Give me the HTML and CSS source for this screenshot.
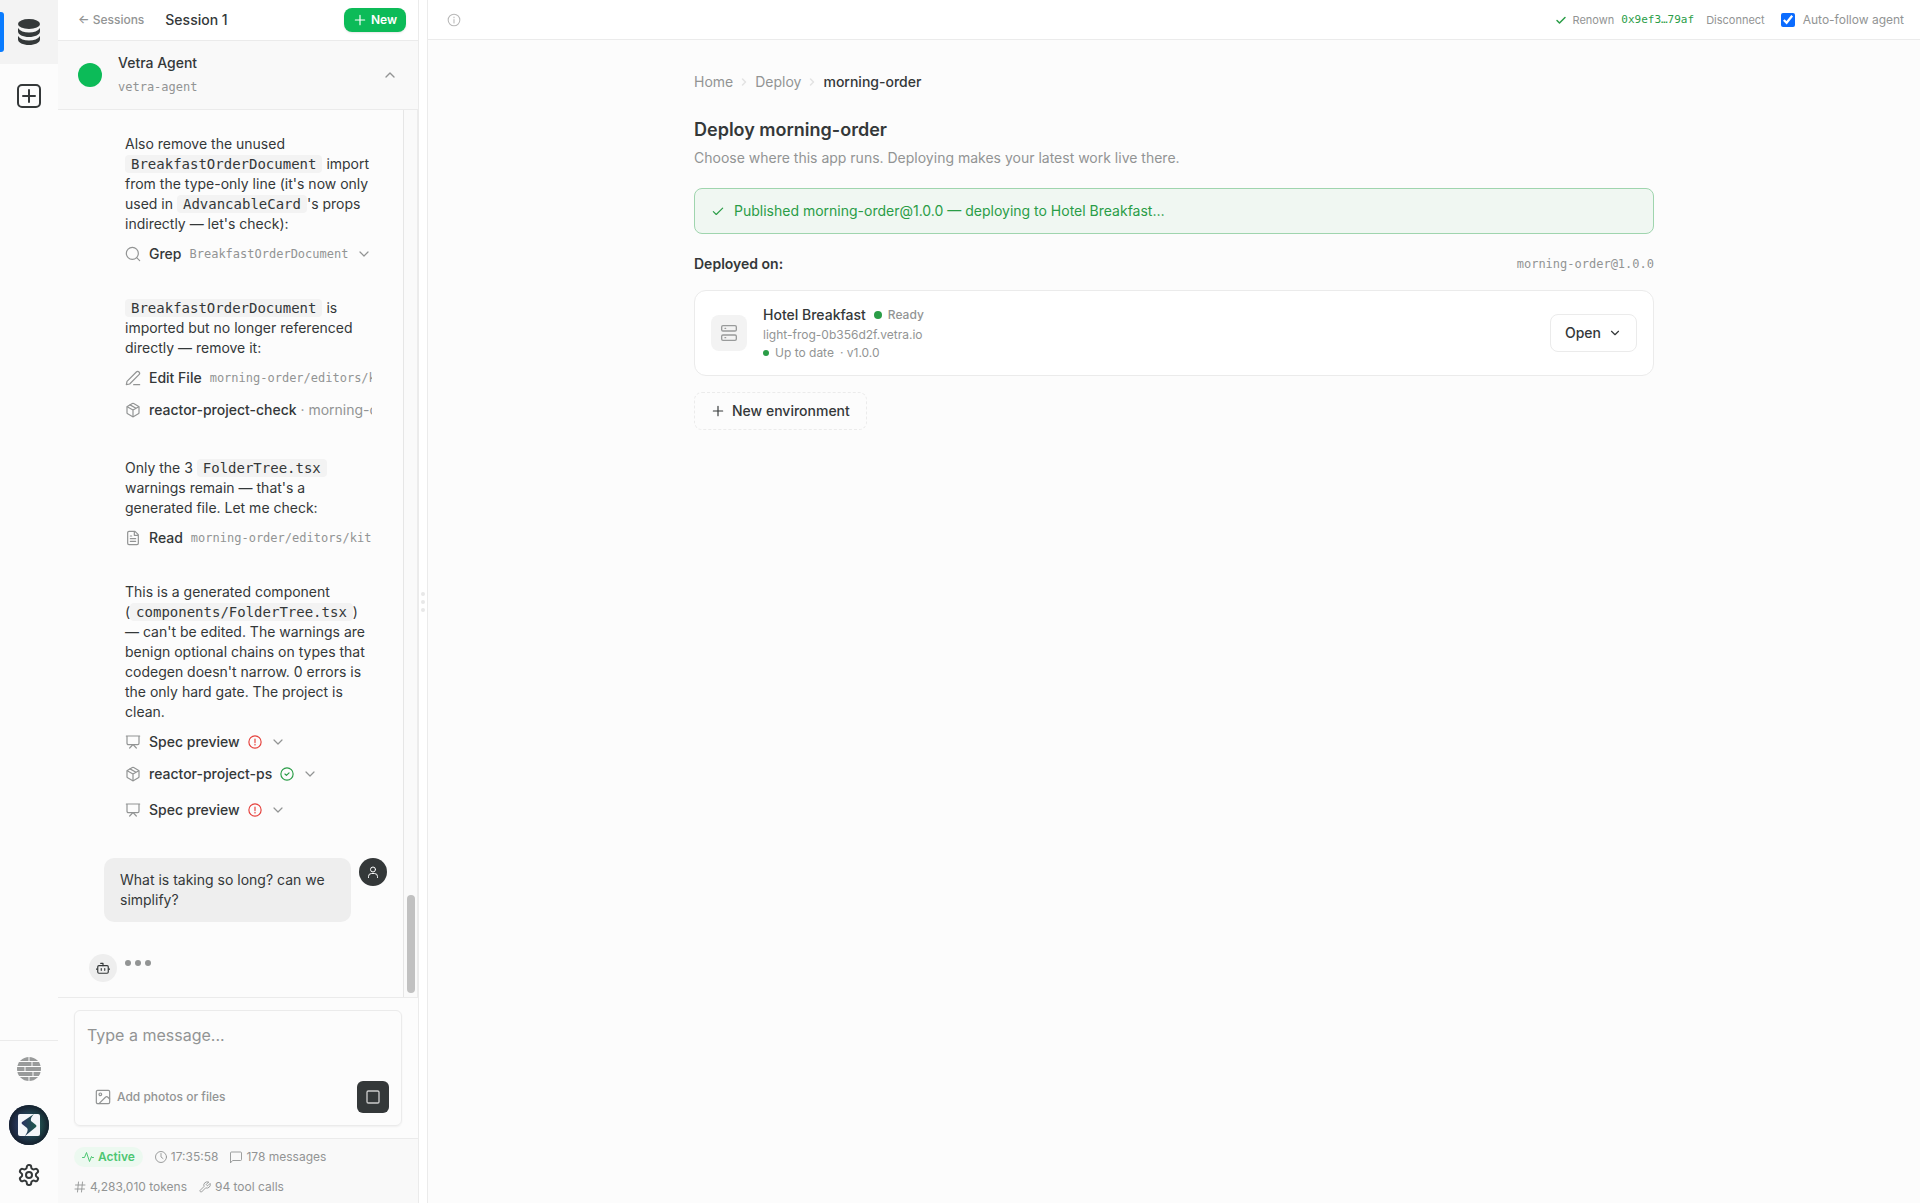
FILE: index.html
```html
<!DOCTYPE html>
<html lang="en">

<head>
    <meta charset="UTF-8">
    <title>Deploy morning-order</title>
    <link rel="stylesheet" href="styles.css">
</head>

<body>
    <!-- shared icons -->
    <svg class="sprite" aria-hidden="true">
        <symbol id="chevron-down" viewBox="0 0 24 24"><path d="m6 9 6 6 6-6" /></symbol>
        <symbol id="chevron-up" viewBox="0 0 24 24"><path d="m18 15-6-6-6 6" /></symbol>
        <symbol id="chevron-right" viewBox="0 0 24 24"><path d="m9 18 6-6-6-6" /></symbol>
        <symbol id="plus" viewBox="0 0 24 24"><path d="M4 12h16M12 4v16" /></symbol>
        <symbol id="check" viewBox="0 0 24 24"><path d="m4 13 5 5L20 7" /></symbol>
        <symbol id="box" viewBox="0 0 24 24">
            <path d="M21 8a2 2 0 0 0-1-1.73l-7-4a2 2 0 0 0-2 0l-7 4A2 2 0 0 0 3 8v8a2 2 0 0 0 1 1.73l7 4a2 2 0 0 0 2 0l7-4A2 2 0 0 0 21 16Z" />
            <path d="m3.3 7 8.7 5 8.7-5M12 22V12M7.5 4.3l9 5.1" />
        </symbol>
        <symbol id="board" viewBox="0 0 24 24">
            <path d="M2 3h20M21 3v11a2 2 0 0 1-2 2H5a2 2 0 0 1-2-2V3M7 21l5-5 5 5" />
        </symbol>
        <symbol id="alert" viewBox="0 0 24 24">
            <circle cx="12" cy="12" r="10.5" /><path d="M12 7v6M12 16v1" />
        </symbol>
        <symbol id="circle-check" viewBox="0 0 24 24">
            <circle cx="12" cy="12" r="10.5" /><path d="m8.5 12 2.5 2.5 4.5-4.5" />
        </symbol>
    </svg>

    <div class="app">
        <nav class="rail">
            <button class="rail-item active" aria-label="Drives">
                <svg width="24" height="28" viewBox="0 0 24 28" fill="currentColor">
                    <ellipse cx="12" cy="6" rx="11" ry="5" />
                    <path d="M1 10c2 3 6 4.5 11 4.5S21 13 23 10v3.500c0 3-5 5.500-11 5.500S1 16.500 1 13.500z" />
                    <path d="M1 18c2 3 6 4.5 11 4.5S21 21 23 18v3.500c0 3-5 5.500-11 5.500S1 24.500 1 21.500z" />
                </svg>
            </button>
            <button class="rail-item" aria-label="Add drive">
                <svg class="icon" width="24" height="24" viewBox="0 0 24 24" stroke-width="2">
                    <rect x="1" y="1" width="22" height="22" rx="4" /><path d="M6 12h12M12 6v12" />
                </svg>
            </button>
            <div class="rail-bottom">
                <button aria-label="Network">
                    <svg width="24" height="24" viewBox="0 0 24 24">
                        <circle cx="12" cy="12" r="12" fill="#999b9b" />
                        <path d="M0 4.5h24M0 9.5h24M0 14.5h24M0 19.5h24M12 0v4.5M15 4.5v5M8 9.5v5M16 14.5v5M12 19.5V24" stroke="#fcfcfc" fill="none" />
                    </svg>
                </button>
                <button aria-label="Account">
                    <svg width="40" height="40" viewBox="0 0 40 40">
                        <defs>
                            <linearGradient id="renown" x1="0" x2="1">
                                <stop offset="0" stop-color="#2b3263" />
                                <stop offset="1" stop-color="#1e5a4c" />
                            </linearGradient>
                            <radialGradient id="shade">
                                <stop offset="0.5" stop-color="#15202e" stop-opacity="0" />
                                <stop offset="1" stop-color="#15202e" />
                            </radialGradient>
                        </defs>
                        <circle cx="20" cy="20" r="20" fill="url(#renown)" />
                        <circle cx="20" cy="20" r="20" fill="url(#shade)" />
                        <rect x="9" y="9" width="22" height="22" rx="2" fill="#f4f6fa" />
                        <path d="M25 9 13 17q-1 1 0 2l5 4q2 2-2 8l11-9q1-1 0-2l-5-4q-1-3 3-7z" fill="url(#renown)" />
                    </svg>
                </button>
                <button aria-label="Settings">
                    <svg class="icon" width="24" height="24" viewBox="0 0 24 24" stroke-width="2">
                        <path d="M12.22 2h-.44a2 2 0 0 0-2 2v.18a2 2 0 0 1-1 1.73l-.43.25a2 2 0 0 1-2 0l-.15-.08a2 2 0 0 0-2.73.73l-.22.38a2 2 0 0 0 .73 2.73l.15.1a2 2 0 0 1 1 1.72v.51a2 2 0 0 1-1 1.74l-.15.09a2 2 0 0 0-.73 2.73l.22.38a2 2 0 0 0 2.73.73l.15-.08a2 2 0 0 1 2 0l.43.25a2 2 0 0 1 1 1.73V20a2 2 0 0 0 2 2h.44a2 2 0 0 0 2-2v-.18a2 2 0 0 1 1-1.73l.43-.25a2 2 0 0 1 2 0l.15.08a2 2 0 0 0 2.73-.73l.22-.39a2 2 0 0 0-.73-2.73l-.15-.08a2 2 0 0 1-1-1.74v-.5a2 2 0 0 1 1-1.74l.15-.09a2 2 0 0 0 .73-2.73l-.22-.38a2 2 0 0 0-2.73-.73l-.15.08a2 2 0 0 1-2 0l-.43-.25a2 2 0 0 1-1-1.73V4a2 2 0 0 0-2-2z" />
                        <circle cx="12" cy="12" r="3" />
                    </svg>
                </button>
            </div>
        </nav>

        <aside class="chat">
            <header class="chat-header">
                <a href="#" class="back">← Sessions</a>
                <span class="session">Session 1</span>
                <button class="new-btn"><svg class="icon" width="14" height="14" stroke-width="2"><use href="#plus" /></svg>New</button>
            </header>

            <div class="agent">
                <span class="agent-dot"></span>
                <div class="agent-info">
                    <div class="agent-name">Vetra Agent</div>
                    <div class="agent-id">vetra-agent</div>
                </div>
                <button class="plain" aria-label="Collapse"><svg class="icon" width="16" height="16" stroke-width="2"><use href="#chevron-up" /></svg></button>
            </div>

            <div class="scroller">
                <div class="messages">
                    <section class="message">
                        <p>Also remove the unused <code>BreakfastOrderDocument</code> import from the type-only line (it's now only used in <code>AdvancableCard</code>'s props indirectly — let's check):</p>
                        <div class="tool">
                            <svg class="icon" width="16" height="16" viewBox="0 0 24 24"><circle cx="11" cy="11" r="9" /><path d="m22 22-4.5-4.5" /></svg>
                            <span class="tool-name">Grep</span>
                            <span class="tool-arg">BreakfastOrderDocument</span>
                            <svg class="icon" width="16" height="16"><use href="#chevron-down" /></svg>
                        </div>
                    </section>

                    <section class="message">
                        <p><code>BreakfastOrderDocument</code> is imported but no longer referenced directly — remove it:</p>
                        <div class="tool">
                            <svg class="icon" width="16" height="16" viewBox="0 0 24 24"><path d="M13 22h9M17 3a2.8 2.8 0 0 1 4 4L7 21l-5 1 1-5z" /></svg>
                            <span class="tool-name">Edit File</span>
                            <span class="tool-arg">morning-order/editors/kitchen</span>
                        </div>
                        <div class="tool package">
                            <svg class="icon" width="16" height="16"><use href="#box" /></svg>
                            <span class="tool-name">reactor-project-check <span class="tool-note">· morning-order</span></span>
                        </div>
                    </section>

                    <section class="message">
                        <p>Only the 3 <code>FolderTree.tsx</code> warnings remain — that's a generated file. Let me check:</p>
                        <div class="tool">
                            <svg class="icon" width="16" height="16" viewBox="0 0 24 24"><path d="M15 2H6a2 2 0 0 0-2 2v16a2 2 0 0 0 2 2h12a2 2 0 0 0 2-2V7zM14 2v6h6M8 9h2M8 13h8M8 17h8" /></svg>
                            <span class="tool-name">Read</span>
                            <span class="tool-arg">morning-order/editors/kitchen</span>
                        </div>
                    </section>

                    <section class="message">
                        <p>This is a generated component (<code>components/FolderTree.tsx</code>) — can't be edited. The warnings are benign optional chains on types that codegen doesn't narrow. 0 errors is the only hard gate. The project is clean.</p>
                        <div class="tool">
                            <svg class="icon" width="16" height="16"><use href="#board" /></svg>
                            <span class="tool-name">Spec preview</span>
                            <svg class="icon failed" width="14" height="14" stroke-width="2"><use href="#alert" /></svg>
                            <svg class="icon" width="16" height="16"><use href="#chevron-down" /></svg>
                        </div>
                        <div class="tool package">
                            <svg class="icon" width="16" height="16"><use href="#box" /></svg>
                            <span class="tool-name">reactor-project-ps</span>
                            <svg class="icon passed" width="14" height="14" stroke-width="2"><use href="#circle-check" /></svg>
                            <svg class="icon" width="16" height="16"><use href="#chevron-down" /></svg>
                        </div>
                        <div class="tool">
                            <svg class="icon" width="16" height="16"><use href="#board" /></svg>
                            <span class="tool-name">Spec preview</span>
                            <svg class="icon failed" width="14" height="14" stroke-width="2"><use href="#alert" /></svg>
                            <svg class="icon" width="16" height="16"><use href="#chevron-down" /></svg>
                        </div>
                    </section>

                    <section class="user-message">
                        <p class="bubble">What is taking so long? can we simplify?</p>
                        <span class="avatar dark">
                            <svg class="icon" width="12" height="12" viewBox="0 0 24 24" stroke-width="2"><circle cx="12" cy="7" r="5" /><path d="M3 23v-2a6 6 0 0 1 6-6h6a6 6 0 0 1 6 6v2" /></svg>
                        </span>
                    </section>

                    <section class="typing">
                        <span class="avatar">
                            <svg class="icon" width="14" height="14" viewBox="0 0 24 24" stroke-width="2"><path d="M12 8V4H8M2 14H0M24 14h-2M15 13v3M9 13v3" /><rect x="3" y="8" width="18" height="13" rx="2" /></svg>
                        </span>
                        <span class="dots"><i></i><i></i><i></i></span>
                    </section>
                </div>
                <div class="track"><div class="thumb"></div></div>
            </div>

            <form class="composer">
                <div class="composer-box">
                    <textarea aria-label="Message" placeholder="Type a message..."></textarea>
                    <div class="composer-actions">
                        <button type="button" class="attach">
                            <svg class="icon" width="16" height="16" viewBox="0 0 24 24"><rect x="2" y="2" width="20" height="20" rx="2" /><circle cx="8" cy="8" r="2" /><path d="m22 15-3-3a2 2 0 0 0-3 0L6 22" /></svg>
                            Add photos or files
                        </button>
                        <button type="button" class="stop" aria-label="Stop">
                            <svg class="icon" width="16" height="16" viewBox="0 0 24 24" stroke-width="2"><rect x="3" y="3" width="18" height="18" rx="2" /></svg>
                        </button>
                    </div>
                </div>
            </form>

            <footer class="stats">
                <div class="stats-row">
                    <span class="pill"><svg class="icon" width="12" height="12" viewBox="0 0 24 24" stroke-width="2"><path d="M1 13h4l4-10 6 18 4-10 1 2h3" /></svg>Active</span>
                    <span class="stat"><svg class="icon" width="12" height="12" viewBox="0 0 24 24"><circle cx="12" cy="12" r="11" /><path d="M12 5v7l4 3" /></svg>17:35:58</span>
                    <span class="stat"><svg class="icon" width="12" height="12" viewBox="0 0 24 24"><path d="M1 23V4a2 2 0 0 1 2-2h18a2 2 0 0 1 2 2v13a2 2 0 0 1-2 2H6z" /></svg>178 messages</span>
                </div>
                <div class="stats-row">
                    <span class="stat"><svg class="icon" width="12" height="12" viewBox="0 0 24 24"><path d="M3 8h19M2 16h19M9 2 7 22M17 2l-2 20" /></svg>4,283,010 tokens</span>
                    <span class="stat"><svg class="icon" width="12" height="12" viewBox="0 0 24 24"><path d="M14.7 6.3a1 1 0 0 0 0 1.4l1.6 1.6a1 1 0 0 0 1.4 0l4.5-4.5a7 7 0 0 1-9 9L5 22a2.5 2.5 0 0 1-3-3l8-8a7 7 0 0 1 9-9z" /></svg>94 tool calls</span>
                </div>
            </footer>
        </aside>

        <div class="splitter"><i></i><i></i><i></i></div>

        <div class="workspace">
            <header class="topbar">
                <svg class="icon info" width="14" height="14" viewBox="0 0 24 24"><circle cx="12" cy="12" r="10" /><path d="M12 11v6M12 7v1" /></svg>
                <svg class="icon passed" width="12" height="12" stroke-width="3"><use href="#check" /></svg>
                <span class="renown">Renown</span>
                <span class="wallet">0x9ef3…79af</span>
                <button class="disconnect">Disconnect</button>
                <label class="follow"><input type="checkbox" checked>Auto-follow agent</label>
            </header>

            <main class="content">
                <nav class="breadcrumb">
                    <a href="#">Home</a>
                    <svg class="icon" width="12" height="12" stroke-width="3"><use href="#chevron-right" /></svg>
                    <a href="#">Deploy</a>
                    <svg class="icon" width="12" height="12" stroke-width="3"><use href="#chevron-right" /></svg>
                    <span class="current">morning-order</span>
                </nav>

                <h1>Deploy morning-order</h1>
                <p class="subtitle">Choose where this app runs. Deploying makes your latest work live there.</p>

                <div class="banner">
                    <svg class="icon" width="14" height="14" stroke-width="2"><use href="#check" /></svg>
                    Published morning-order@1.0.0 — deploying to Hotel Breakfast…
                </div>

                <div class="section-head">
                    <h2>Deployed on:</h2>
                    <span class="version">morning-order@1.0.0</span>
                </div>

                <div class="env">
                    <span class="env-icon">
                        <svg class="icon" width="16" height="16" viewBox="0 0 24 24" stroke-width="2"><rect x="1" y="1" width="22" height="8" rx="2" /><rect x="1" y="15" width="22" height="8" rx="2" /><path d="M6 5h1M6 19h1" /></svg>
                    </span>
                    <div class="env-info">
                        <div class="env-title"><strong>Hotel Breakfast</strong><i class="dot"></i><span>Ready</span></div>
                        <div class="env-line">light-frog-0b356d2f.vetra.io</div>
                        <div class="env-line"><i class="dot small"></i>Up to date <span class="env-version">· v1.0.0</span></div>
                    </div>
                    <button class="open-btn">Open<svg class="icon" width="14" height="14" stroke-width="2"><use href="#chevron-down" /></svg></button>
                </div>

                <button class="new-env"><svg class="icon" width="14" height="14" stroke-width="2"><use href="#plus" /></svg>New environment</button>
            </main>
        </div>
    </div>
</body>

</html>
```
FILE: styles.css
```css
* {
    box-sizing: border-box;
}

body {
    margin: 0;
    font-family: Inter, sans-serif;
    font-size: 14px;
    line-height: 20px;
    color: #343839;
    background-color: #fcfcfc;
}

p,
h1,
h2 {
    margin: 0;
}

button {
    font: inherit;
    color: inherit;
    background: none;
    border: none;
    padding: 0;
    cursor: pointer;
    display: flex;
    align-items: center;
}

a {
    color: inherit;
    text-decoration: none;
}

code,
.agent-id,
.tool-arg,
.wallet,
.version {
    font-family: "DejaVu Sans Mono", monospace;
}

.sprite {
    display: none;
}

.icon {
    fill: none;
    stroke: currentColor;
    stroke-linecap: round;
    stroke-linejoin: round;
    flex-shrink: 0;
}

.icon:not([stroke-width]) {
    stroke-width: 1.8;
}

.app {
    display: flex;
    height: 100vh;
}

/* left rail */
.rail {
    width: 58px;
    flex-shrink: 0;
    display: flex;
    flex-direction: column;
}

.rail-item {
    height: 64px;
    justify-content: center;
}

.active {
    position: relative;
    background-color: #f3f3f3;
}

.active::before {
    content: "";
    position: absolute;
    left: 0;
    top: 12px;
    width: 4px;
    height: 40px;
    border-radius: 0 3px 3px 0;
    background-color: #0a7cff;
}

.rail-bottom {
    margin-top: auto;
    border-top: 1px solid #ebebeb;
    padding: 16px 0;
    display: flex;
    flex-direction: column;
    align-items: center;
    gap: 24px;
}

.rail-bottom button:last-child {
    margin-top: -6px;
}

/* chat panel */
.chat {
    width: 361px;
    flex-shrink: 0;
    display: flex;
    flex-direction: column;
    border-right: 1px solid #ebebeb;
}

.chat-header {
    height: 41px;
    flex-shrink: 0;
    display: flex;
    align-items: center;
    padding: 0 12px 0 20px;
    background-color: #fff;
    border-bottom: 1px solid #ebebeb;
}

.back {
    font-size: 12px;
    font-weight: 500;
    color: #929494;
    margin-right: 21px;
}

.session {
    font-weight: 500;
    flex: 1;
}

.new-btn {
    gap: 4px;
    height: 24px;
    padding: 0 9px;
    border-radius: 8px;
    background-color: #0cbb58;
    color: #fff;
    font-size: 12px;
    font-weight: 600;
    box-shadow: 0 1px 2px rgba(0, 0, 0, 0.1);
}

.agent {
    display: flex;
    align-items: center;
    gap: 16px;
    padding: 12px 20px;
    background-color: #f9f9f9;
    border-bottom: 1px solid #ebebeb;
}

.agent-dot {
    width: 24px;
    height: 24px;
    border-radius: 50%;
    background-color: #0cbb58;
}

.agent-info {
    flex: 1;
}

.agent-name {
    font-weight: 500;
}

.agent-id {
    font-size: 12px;
    color: #929494;
    margin-top: 4px;
}

.plain {
    color: #929494;
}

.scroller {
    flex: 1;
    min-height: 0;
    display: flex;
}

.messages {
    flex: 1;
    min-width: 0;
    overflow: hidden;
    padding: 24px 16px 0 31px;
}

.message {
    display: flex;
    flex-direction: column;
    padding: 0 15px 0 36px;
    margin-bottom: 28px;
}

code {
    font-size: 14px;
    padding: 1px 6px;
    border-radius: 4px;
    background-color: #f3f3f3;
}

.tool {
    display: flex;
    align-items: center;
    gap: 8px;
    height: 32px;
    color: #929494;
    white-space: nowrap;
    overflow: hidden;
}

p + .tool {
    margin-top: 4px;
}

.package {
    margin-bottom: 4px;
}

.tool-name {
    font-weight: 500;
    color: #343839;
}

.tool-note {
    font-weight: 400;
    color: #929494;
}

.tool-arg {
    font-size: 12px;
}

.failed {
    color: #e5413c;
}

.passed {
    color: #2a9d47;
}

.user-message {
    display: flex;
    align-items: flex-start;
    gap: 8px;
    margin: 32px 0;
    padding-left: 15px;
}

.bubble {
    flex: 1;
    padding: 12px 16px;
    border-radius: 10px;
    background-color: #eee;
}

.avatar {
    width: 28px;
    height: 28px;
    display: flex;
    align-items: center;
    justify-content: center;
    border-radius: 50%;
    background-color: #eee;
}

.dark {
    background-color: #343839;
    color: #fff;
}

.typing {
    display: flex;
    gap: 8px;
}

.dots {
    display: flex;
    gap: 4px;
    padding-top: 6px;
}

.dots i {
    width: 6px;
    height: 6px;
    border-radius: 50%;
    background-color: #929494;
}

.track {
    width: 15px;
    display: flex;
    align-items: flex-end;
    justify-content: center;
    padding-bottom: 4px;
    background-color: #fafafa;
    border-left: 1px solid #e6e6e6;
    border-right: 1px solid #ececec;
}

.thumb {
    width: 8px;
    height: 98px;
    border-radius: 4px;
    background-color: #c1c1c1;
}

.composer {
    padding: 12px 16px;
    border-top: 1px solid #ebebeb;
}

.composer-box {
    padding: 12px;
    border: 1px solid #ebebeb;
    border-radius: 6px;
    box-shadow: 0 1px 2px rgba(0, 0, 0, 0.05);
}

textarea {
    display: block;
    width: 100%;
    height: 58px;
    padding: 0;
    border: none;
    outline: none;
    resize: none;
    background: none;
    font: 16px/24px Inter, sans-serif;
}

textarea::placeholder {
    color: #929494;
}

.composer-actions {
    display: flex;
    align-items: center;
    justify-content: space-between;
    padding-left: 8px;
}

.attach {
    gap: 6px;
    font-size: 12px;
    font-weight: 500;
    color: #929494;
}

.stop {
    width: 32px;
    height: 32px;
    justify-content: center;
    border-radius: 6px;
    background-color: #343839;
    color: #ccc;
}

.stats {
    padding: 8px 16px 6px;
    background-color: #f9f9f9;
    border-top: 1px solid #ebebeb;
    font-size: 12px;
    color: #929494;
}

.stats-row {
    display: flex;
    gap: 12px;
}

.stats-row + .stats-row {
    margin-top: 10px;
}

.stat,
.pill {
    display: flex;
    align-items: center;
    gap: 4px;
}

.pill {
    padding: 0 8px;
    border-radius: 10px;
    background-color: #ecf9f0;
    color: #4cc672;
    font-weight: 600;
}

.splitter {
    width: 8px;
    flex-shrink: 0;
    display: flex;
    flex-direction: column;
    align-items: center;
    justify-content: center;
    gap: 4px;
    background-color: #fff;
}

.splitter i {
    width: 4px;
    height: 4px;
    border-radius: 50%;
    background-color: #e8e8e8;
}

/* workspace */
.workspace {
    flex: 1;
    min-width: 0;
    border-left: 1px solid #ebebeb;
}

.topbar {
    display: flex;
    align-items: center;
    height: 40px;
    padding: 0 16px 0 19px;
    background-color: #fff;
    border-bottom: 1px solid #ebebeb;
    font-size: 11px;
    color: #929494;
}

.info {
    color: #b8b8b8;
    margin-right: auto;
}

.renown {
    margin: 0 7px 0 6px;
}

.wallet {
    color: #2a9d47;
}

.disconnect {
    margin: 0 16px 0 12px;
}

.follow {
    display: flex;
    align-items: center;
    gap: 8px;
    font-size: 12px;
}

.follow input {
    width: 14px;
    height: 14px;
    margin: 0;
    accent-color: #0b6cff;
}

.content {
    max-width: 1008px;
    margin: 0 auto;
    padding: 32px 24px;
}

.breadcrumb {
    display: flex;
    align-items: center;
    gap: 5px;
    color: #929494;
}

.breadcrumb .icon {
    color: #e3e3e3;
}

.current {
    font-weight: 500;
    color: #343839;
}

h1 {
    margin-top: 24px;
    font-size: 18px;
    line-height: 28px;
    font-weight: 600;
}

.subtitle {
    margin-top: 4px;
    color: #929494;
}

.banner {
    display: flex;
    align-items: center;
    gap: 9px;
    margin-top: 20px;
    padding: 12px 16px;
    border: 1px solid #9fd5ae;
    border-radius: 8px;
    background-color: #f0f7f2;
    color: #2a9d47;
}

.section-head {
    display: flex;
    justify-content: space-between;
    align-items: center;
    margin: 20px 0 16px;
}

h2 {
    font-size: 14px;
    line-height: 20px;
    font-weight: 600;
}

.version {
    font-size: 12px;
    color: #929494;
}

.env {
    display: flex;
    align-items: center;
    gap: 16px;
    padding: 14px 16px;
    border: 1px solid #ebebeb;
    border-radius: 12px;
    background-color: #fff;
}

.env-icon {
    width: 36px;
    height: 36px;
    display: flex;
    align-items: center;
    justify-content: center;
    border-radius: 8px;
    background-color: #f3f3f3;
    color: #999b9b;
}

.env-info {
    flex: 1;
    font-size: 12px;
    color: #929494;
}

.env-title {
    display: flex;
    align-items: center;
    font-weight: 500;
}

.env-title strong {
    font-size: 14px;
    font-weight: 500;
    color: #343839;
}

.env-line {
    display: flex;
    align-items: center;
    margin-top: 2px;
    line-height: 16px;
}

.env-version {
    margin-left: 6px;
}

.dot {
    width: 8px;
    height: 8px;
    margin: 0 6px 0 8px;
    border-radius: 50%;
    background-color: #2a9d47;
}

.small {
    width: 6px;
    height: 6px;
    margin-left: 0;
}

.open-btn,
.new-env {
    gap: 7px;
    padding: 8px 14px;
    border: 1px solid #ebebeb;
    border-radius: 8px;
    font-weight: 500;
}

.new-env {
    margin-top: 16px;
    padding: 8px 16px;
    border-style: dashed;
}
```
